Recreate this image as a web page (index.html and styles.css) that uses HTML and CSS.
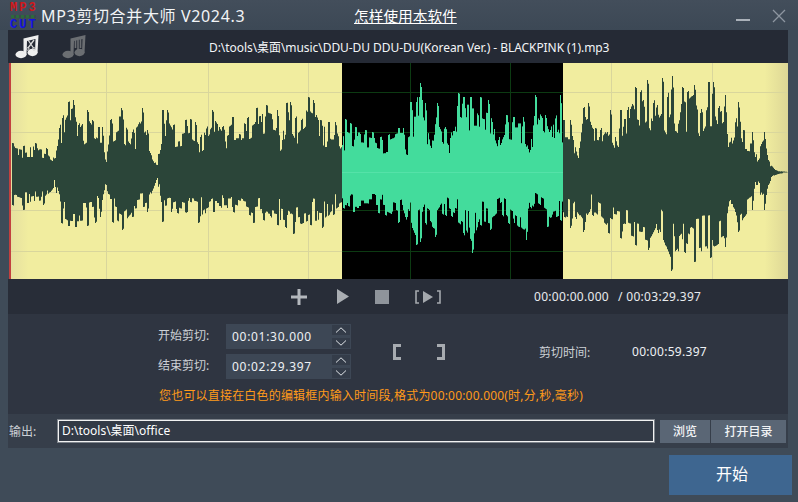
FILE: index.html
```html
<!DOCTYPE html>
<html lang="zh-CN">
<head>
    <meta charset="UTF-8">
    <title>MP3剪切合并大师</title>
    <link rel="stylesheet" href="styles.css">
</head>
<body>
    <div class="window">
        <header class="titlebar">
            <div class="logo">
                <span class="logo-red">MP3</span>
                <span class="logo-green"></span>
                <span class="logo-blue">CUT</span>
            </div>
            <div class="app-title">MP3剪切合并大师 V2024.3</div>
            <a class="help-link">怎样使用本软件</a>
            <div class="win-buttons">
                <svg width="14" height="14" viewBox="0 0 14 14"><rect x="0" y="10" width="14" height="2" fill="#aab1b9"/></svg>
                <svg width="14" height="14" viewBox="0 0 14 14"><path d="M1 1L13 13M13 1L1 13" stroke="#8d96a0" stroke-width="1.3" fill="none"/></svg>
            </div>
        </header>

        <div class="panel">
            <div class="file-bar">
                <div class="file-icons">
                    <svg width="24" height="24" viewBox="0 0 24 24">
                        <path d="M8.5 3.5L23.5 0L22.5 18H20L20.5 4L12 6L11.5 20H8.5Z" fill="#efefef"/>
                        <ellipse cx="6" cy="19.5" rx="5.5" ry="3.7" fill="#efefef"/>
                        <ellipse cx="17.5" cy="17.5" rx="5" ry="3.7" fill="#efefef"/>
                        <path d="M13 5L18.5 13M19 5L13 13" stroke="#d8d8d8" stroke-width="1.3" fill="none"/>
                        <circle cx="12.8" cy="14" r="1.3" stroke="#d8d8d8" fill="none"/>
                        <circle cx="19" cy="14" r="1.3" stroke="#d8d8d8" fill="none"/>
                    </svg>
                    <svg width="24" height="24" viewBox="0 0 24 24">
                        <path d="M8.5 3.5L23.5 0L22.5 18H20L20.5 4L12 6L11.5 20H8.5Z" fill="#6b6e72"/>
                        <path d="M13.5 5V13M16 5V15M18.5 4V13" stroke="#6b6e72" stroke-width="1.6"/>
                        <ellipse cx="6" cy="19.5" rx="5.5" ry="3.7" fill="#6b6e72"/>
                        <ellipse cx="17.5" cy="17.5" rx="5" ry="3.7" fill="#6b6e72"/>
                    </svg>
                </div>
                <div class="file-name">D:\tools\桌面\music\DDU-DU DDU-DU(Korean Ver.) - BLACKPINK (1).mp3</div>
            </div>

            <div class="wave">
                <svg width="779" height="216" viewBox="9 63 779 216">
                    <defs>
                        <linearGradient id="paper" x1="0" x2="1" y1="0" y2="0">
                            <stop offset="0" stop-color="#e4dfa0"/>
                            <stop offset="0.025" stop-color="#f1ed9f"/>
                            <stop offset="0.97" stop-color="#f1ed9f"/>
                            <stop offset="1" stop-color="#ddd796"/>
                        </linearGradient>
                        <clipPath id="selClip"><rect x="342" y="63" width="221" height="216"/></clipPath>
                    </defs>
                    <rect x="9" y="63" width="779" height="216" fill="url(#paper)"/>
                    <rect x="342" y="63" width="221" height="216" fill="#000"/>
                    <rect x="9" y="63" width="2" height="216" fill="#c2403f"/>
                    <path class="grid-light" d="M106.5 63V279M208.5 63V279M308.5 63V279M611.5 63V279M712.5 63V279M11 92.5H342M563 92.5H788M11 132.5H342M563 132.5H788M563 152.5H788M11 192.5H342M563 192.5H788M11 210.5H342M563 210.5H788M11 251.5H342M563 251.5H788"/>
                    <path class="grid-dark" d="M410.5 63V279M510.5 63V279M342 92.5H563M342 132.5H563M342 210.5H563M342 251.5H563"/>
                    <path id="waveDark" fill="#2b4539"/>
                    <path id="waveSel" fill="#43dc9c" clip-path="url(#selClip)"/>
                    <path d="M342 172.5H563" stroke="#55e2a8" stroke-width="1"/>
                </svg>
            </div>

            <div class="transport">
                <div class="transport-buttons">
                    <svg class="plus" width="16" height="16" viewBox="0 0 16 16"><path d="M6.5 0H9.5V6.5H16V9.5H9.5V16H6.5V9.5H0V6.5H6.5Z" fill="#b4b8bd"/></svg>
                    <svg width="12" height="15" viewBox="0 0 12 15"><path d="M0 0L12 7.5L0 15Z" fill="#a9adb2"/></svg>
                    <svg width="14" height="14" viewBox="0 0 14 14"><rect width="14" height="14" fill="#8f949b"/></svg>
                    <svg width="26" height="14" viewBox="0 0 26 14">
                        <path d="M4 1H1V13H4M22 1H25V13H22" stroke="#a4a8ad" stroke-width="1.6" fill="none"/>
                        <path d="M8 1L18 7L8 13Z" fill="#a4a8ad"/>
                    </svg>
                </div>
                <div class="times">
                    <span>00:00:00.000</span>
                    <span>/ 00:03:29.397</span>
                </div>
            </div>

            <div class="trim">
                <div class="trim-main">
                    <div class="trim-fields">
                        <div class="trim-row">
                            <label>开始剪切:</label>
                            <div class="time-input">00:01:30.000</div>
                            <div class="spin">
                                <button><svg width="12" height="6" viewBox="0 0 12 6"><path d="M1 5.5L6 .8L11 5.5" stroke="#dfe3e7" fill="none"/></svg></button>
                                <button><svg width="12" height="6" viewBox="0 0 12 6"><path d="M1 .5L6 5.2L11 .5" stroke="#dfe3e7" fill="none"/></svg></button>
                            </div>
                        </div>
                        <div class="trim-row">
                            <label>结束剪切:</label>
                            <div class="time-input">00:02:29.397</div>
                            <div class="spin">
                                <button><svg width="12" height="6" viewBox="0 0 12 6"><path d="M1 5.5L6 .8L11 5.5" stroke="#dfe3e7" fill="none"/></svg></button>
                                <button><svg width="12" height="6" viewBox="0 0 12 6"><path d="M1 .5L6 5.2L11 .5" stroke="#dfe3e7" fill="none"/></svg></button>
                            </div>
                        </div>
                    </div>
                    <div class="marks">
                        <svg width="8" height="16" viewBox="0 0 8 16"><path d="M8 1.5H1.5V14.5H8" stroke="#a7abb0" stroke-width="3" fill="none"/></svg>
                        <svg width="8" height="16" viewBox="0 0 8 16"><path d="M0 1.5H6.5V14.5H0" stroke="#a7abb0" stroke-width="3" fill="none"/></svg>
                    </div>
                    <div class="duration-label">剪切时间:</div>
                    <div class="duration-value">00:00:59.397</div>
                </div>
                <div class="hint">您也可以直接在白色的编辑框内输入时间段,格式为00:00:00.000(时,分,秒,毫秒)</div>
            </div>

            <div class="output">
                <label>输出:</label>
                <div class="output-path">D:\tools\桌面\office</div>
                <button class="btn btn-browse">浏览</button>
                <button class="btn btn-open">打开目录</button>
            </div>
        </div>

        <div class="footer">
            <button class="start">开始</button>
        </div>
    </div>
    <script src="waveform.js"></script>
</body>
</html>
```

FILE: styles.css
```css
html, body {
    margin: 0;
    padding: 0;
    height: 100%;
    overflow: hidden;
    background-color: #3f4b58;
    font-family: "Noto Sans", "Noto Sans CJK SC", sans-serif;
    font-size: 12px;
    color: #fff;
}

button {
    font-family: inherit;
    border: none;
    padding: 0;
}

.window {
    display: flex;
    flex-direction: column;
    height: 502px;
}

/* barra de titulo */
.titlebar {
    display: flex;
    align-items: center;
    height: 30px;
    padding-left: 10px;
    background: linear-gradient(#434e5b, #3c4855);
}

.logo {
    display: flex;
    flex-direction: column;
    width: 27px;
    margin-top: 2px;
    font-family: "Liberation Mono", monospace;
    font-size: 12px;
    font-weight: bold;
    line-height: 12px;
    letter-spacing: 2px;
}

.logo-red { color: #d0181b; }
.logo-blue { color: #1212e0; }

.logo-green {
    height: 3px;
    margin: 1px;
    background: repeating-linear-gradient(90deg, #2c6a3c 0 3px, #3a4a4a 3px 5px);
}

.app-title {
    margin-left: 4px;
    width: 313px;
    font-size: 16px;
    letter-spacing: 0.65px;
    color: #f2f4f6;
    white-space: nowrap;
}

.help-link {
    font-size: 14.7px;
    color: #fff;
    text-decoration: underline;
    white-space: nowrap;
}

.win-buttons {
    display: flex;
    gap: 22px;
    margin-left: auto;
    margin-right: 12px;
    padding-top: 2px;
}

/* painel principal */
.panel {
    margin: 0 10px 0 8px;
    display: flex;
    flex-direction: column;
}

.file-bar {
    display: flex;
    align-items: center;
    height: 33px;
    background-color: #252a35;
}

.file-icons {
    display: flex;
    gap: 23px;
    width: 201px;
    padding-left: 7px;
    box-sizing: border-box;
}

.file-name {
    color: #f3f5f7;
    letter-spacing: -0.06px;
    white-space: nowrap;
}

.wave {
    height: 216px;
    margin-left: 1px;
}

.wave svg {
    display: block;
}

.grid-light {
    stroke: #d9d69c;
    fill: none;
}

.grid-dark {
    stroke: #0c3a12;
    fill: none;
}

.transport {
    display: flex;
    align-items: center;
    height: 35px;
    background-color: #282d38;
}

.transport-buttons {
    display: flex;
    align-items: center;
    width: 526px;
    padding-left: 283px;
    box-sizing: border-box;
    gap: 26px;
}

.plus {
    margin-right: 4px;
}

.times {
    display: flex;
    gap: 9px;
    color: #e8ebee;
    letter-spacing: 0.3px;
    white-space: nowrap;
}

.trim {
    height: 100px;
    padding-top: 10px;
    box-sizing: border-box;
    background-color: #2f3541;
}

.trim-main {
    display: flex;
    align-items: center;
}

.trim-fields {
    display: flex;
    flex-direction: column;
    gap: 5px;
    padding-left: 150px;
}

.trim-row {
    display: flex;
    align-items: center;
}

.trim-row label {
    width: 68px;
    padding-bottom: 3px;
    color: #ccd0d5;
}

.time-input {
    width: 105px;
    height: 25px;
    line-height: 25px;
    padding-left: 6px;
    box-sizing: border-box;
    background-color: #3d4755;
    letter-spacing: 0.7px;
    color: #eef1f4;
}

.spin {
    display: flex;
    flex-direction: column;
    gap: 1px;
    width: 20px;
    height: 25px;
    background-color: #3d4755;
}

.spin button {
    flex: 1;
    display: flex;
    align-items: center;
    justify-content: center;
    background-color: #343c49;
    border: 1px solid #3d4755;
}

.marks {
    display: flex;
    gap: 36px;
    margin-left: 42px;
    width: 52px;
}

.duration-label {
    margin-left: 94px;
    width: 93px;
    color: #ccd0d5;
}

.duration-value {
    letter-spacing: 0.3px;
    color: #eef1f4;
}

.hint {
    margin-top: 7px;
    padding-left: 151px;
    color: #ff9a1a;
    letter-spacing: 0.19px;
    white-space: nowrap;
}

.output {
    display: flex;
    align-items: center;
    height: 34px;
    background-color: #363e4a;
}

.output label {
    width: 49px;
    padding-left: 1px;
    box-sizing: border-box;
    color: #ccd0d5;
}

.output-path {
    width: 598px;
    height: 24px;
    line-height: 20px;
    padding-left: 3px;
    box-sizing: border-box;
    border: 2px solid #f2f2f2;
    outline: 1px solid #7d838b;
    outline-offset: -1px;
    background-color: #333a46;
}

.btn {
    height: 23px;
    background-color: #5a6675;
    color: #f0f2f4;
    font-size: 12px;
    font-weight: 500;
}

.btn-browse {
    width: 50px;
    margin-left: 5px;
}

.btn-open {
    width: 75px;
    margin-left: 1px;
}

.footer {
    display: flex;
    justify-content: flex-end;
    padding: 7px 6px 0 0;
}

.start {
    width: 123px;
    height: 40px;
    padding: 0 0 5px 3px;
    background-color: #3e6690;
    color: #fff;
    font-size: 16px;
}
```

FILE: waveform.js
```js
// contorno de cima e de baixo da onda, [x, y] em coordenadas da janela
var topPeaks = [[12,143],[23,146],[35,143],[46,148],[55,158],[59,128],[62,118],[68,102],[73,100],[78,125],[87,110],[92,120],[98,127],[102,127],[106,162],[110,120],[121,108],[132,132],[142,108],[147,130],[157,165],[162,110],[167,110],[173,125],[185,120],[190,119],[195,122],[200,137],[212,110],[222,127],[232,117],[247,118],[256,108],[266,105],[277,110],[282,140],[286,103],[290,102],[295,118],[308,97],[313,100],[320,120],[328,122],[335,122],[342,145],[345,119],[350,123],[355,127],[365,130],[372,132],[380,137],[388,135],[398,128],[403,128],[407,155],[410,102],[416,102],[420,83],[425,103],[431,148],[437,103],[445,127],[450,138],[458,93],[463,97],[470,97],[480,97],[488,100],[498,140],[506,115],[513,117],[523,117],[530,150],[535,95],[545,115],[550,130],[560,95],[563,120],[570,120],[578,158],[583,108],[588,103],[595,128],[600,130],[610,110],[618,147],[620,110],[627,110],[635,87],[640,92],[647,80],[653,103],[662,78],[667,97],[672,76],[677,133],[682,87],[687,92],[694,85],[700,113],[708,82],[713,82],[718,108],[725,95],[728,147],[738,102],[743,130],[752,132],[755,157],[764,132],[768,160],[775,170],[788,172]];

var bottomPeaks = [[12,205],[23,210],[43,205],[55,187],[61,223],[68,226],[75,227],[87,226],[95,223],[100,217],[106,185],[112,222],[122,230],[132,217],[147,212],[157,178],[162,222],[177,213],[198,223],[213,212],[233,212],[253,223],[263,220],[277,225],[285,227],[293,234],[310,225],[322,228],[333,215],[343,208],[353,212],[378,213],[385,215],[398,223],[405,217],[416,245],[420,242],[425,223],[435,237],[445,215],[463,233],[472,253],[480,225],[490,230],[502,215],[508,223],[526,240],[530,207],[547,227],[560,220],[570,228],[575,217],[583,232],[592,215],[608,233],[620,238],[635,245],[648,250],[657,230],[671,271],[684,252],[694,262],[710,258],[725,247],[730,200],[738,232],[752,210],[755,182],[764,210],[768,185],[775,175],[788,172]];

var seed = 7;
function rnd() {
    seed = (seed * 16807) % 2147483647;
    return seed / 2147483647;
}

function envelope(points, x) {
    for (var i = 1; i < points.length; i++) {
        if (x <= points[i][0]) {
            var a = points[i - 1], b = points[i];
            return a[1] + (b[1] - a[1]) * (x - a[0]) / (b[0] - a[0]);
        }
    }
    return points[points.length - 1][1];
}

// cada pico ocupa duas colunas
function isPeak(points, x) {
    return points.some(function (p) { return p[0] === x || p[0] === x - 1; });
}

// cada dente da onda dura de 1 a 3 colunas
function makeNoise() {
    var hold = 0, n = 0;
    return function () {
        if (hold <= 0) {
            n = rnd();
            hold = 1 + Math.floor(rnd() * 3);
        }
        hold--;
        return n;
    };
}

function jagged(points, x, noise) {
    var y = envelope(points, x);
    var n = noise();
    if (isPeak(points, x)) return y;
    return y + (172 - y) * (0.1 + 0.42 * n * n);
}

var upper = [], lower = [];
var noiseUp = makeNoise(), noiseDown = makeNoise();
for (var x = 12; x <= 788; x++) {
    upper.push('L' + x + ' ' + jagged(topPeaks, x, noiseUp).toFixed(1) + 'h1');
    lower.unshift('L' + (x + 1) + ' ' + jagged(bottomPeaks, x, noiseDown).toFixed(1) + 'h-1');
}

var d = 'M12 172' + upper.join('') + lower.join('') + 'Z';
document.getElementById('waveDark').setAttribute('d', d);
document.getElementById('waveSel').setAttribute('d', d);
```
